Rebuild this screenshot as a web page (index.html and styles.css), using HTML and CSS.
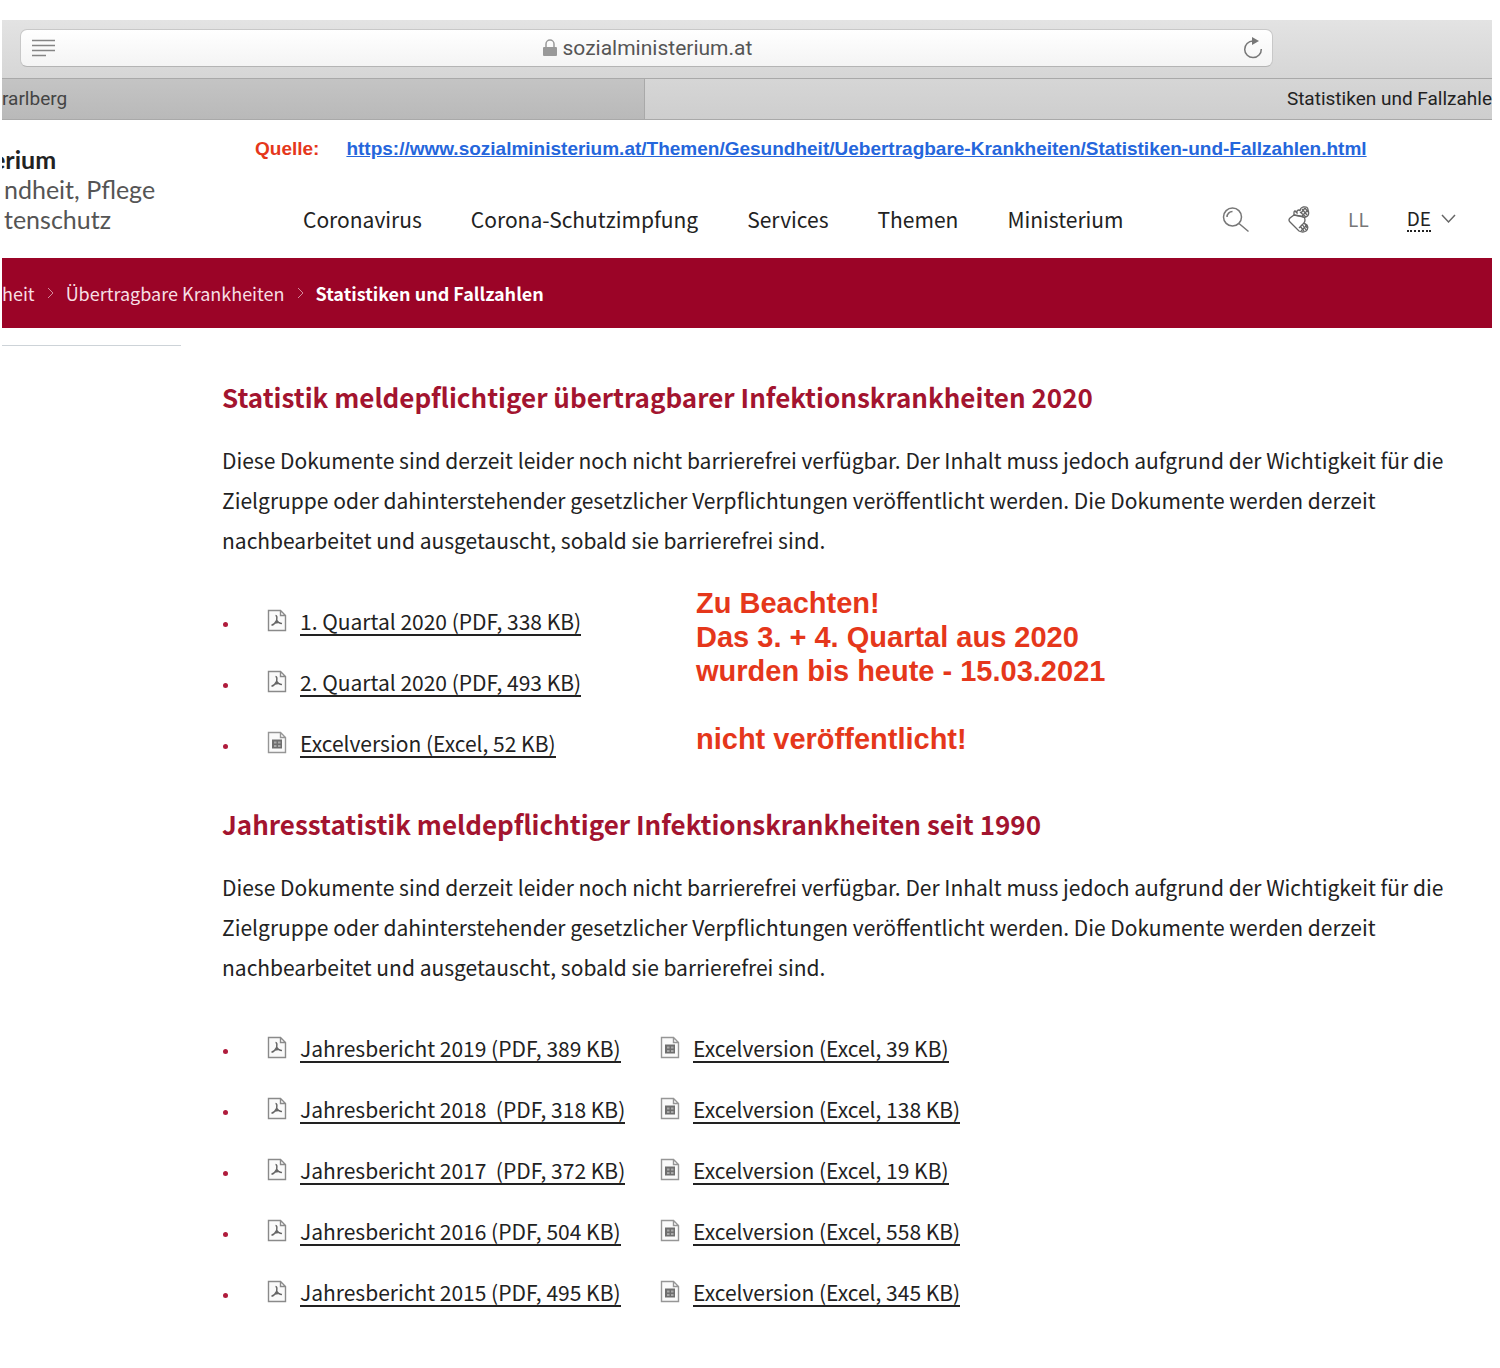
FILE: index.html
```html
<!DOCTYPE html>
<html lang="de">
<head>
<meta charset="utf-8">
<title>Statistiken und Fallzahlen</title>
<link rel="stylesheet" href="styles.css">
</head>
<body>
<svg class="sprite" aria-hidden="true">
  <symbol id="pdf" viewBox="0 0 20 24">
    <path d="M1.500 1.500h12l5 5v15h-17zM13.500 1.500v5h5" fill="#fafafa" stroke="#8a8a8a" stroke-width="1.400"/>
    <path d="M8.500 6.500c2 0 1.200 3 1.200 4.800M9.700 11.300c-1 2-2.500 4.300-5.200 5M9.700 11.300c1 1.900 2.500 2.900 5.300 3.200M7.300 14.400c2-.9 4-1.100 6-.6" fill="none" stroke="#666" stroke-width="1.500"/>
  </symbol>
  <symbol id="xls" viewBox="0 0 20 24">
    <path d="M1.500 1.500h12l5 5v15h-17zM13.500 1.500v5h5" fill="#fafafa" stroke="#969696" stroke-width="1.400"/>
    <path d="M5 8.500h10v9H5z" fill="#6e6e6e"/>
    <path d="M7 10.500h2.500v2H7zM11 10.500h2.500v2H11zM7 14h2.500v2H7zM11 14h2.500v2H11z" fill="#a8a8a8"/>
  </symbol>
</svg>

<header class="browser">
  <div class="toolbar">
    <form class="address">
      <button class="plain" type="button" aria-label="Reader">
        <svg width="24" height="18" viewBox="0 0 24 18" fill="none" stroke="#858585" stroke-width="1.500"><path d="M0 1.500h23M0 6.500h23M0 11.500h23M0 16.500h14"/></svg>
      </button>
      <div class="location">
        <svg width="14" height="18" viewBox="0 0 14 18"><path d="M3 8V5a4 4 0 0 1 8 0v3" fill="none" stroke="#999" stroke-width="1.500"/><rect x="0" y="8" width="14" height="9" rx="1" fill="#999"/></svg>
        <input class="url" type="text" value="sozialministerium.at" aria-label="Adresse">
      </div>
      <button class="plain" type="button" aria-label="Neu laden">
        <svg width="20" height="22" viewBox="0 0 20 22"><path d="M10 4a8.300 8.300 0 1 0 8.300 8" fill="none" stroke="#777" stroke-width="1.500"/><path d="M9 0v8l7-4z" fill="#777"/></svg>
      </button>
    </form>
  </div>
  <nav class="tabs" aria-label="Tabs">
    <a class="tab" href="#">rarlberg</a>
    <a class="tab tab-active" href="#">Statistiken und Fallzahle</a>
  </nav>
</header>

<div class="masthead">
  <div class="logo"><strong>erium</strong><span>ndheit, Pflege</span><span>tenschutz</span></div>
  <div class="masthead-main">
    <p class="source"><span>Quelle:</span><a href="#">https://www.sozialministerium.at/Themen/Gesundheit/Uebertragbare-Krankheiten/Statistiken-und-Fallzahlen.html</a></p>
    <div class="navrow">
      <nav class="menu" aria-label="Hauptmenü">
        <a href="#">Coronavirus</a><a href="#">Corona-Schutzimpfung</a><a href="#">Services</a><a href="#">Themen</a><a href="#">Ministerium</a>
      </nav>
      <div class="tools">
        <button class="plain" type="button" aria-label="Suche">
          <svg width="28" height="28" viewBox="0 0 28 28" fill="none" stroke="#777" stroke-width="1.500"><circle cx="10.500" cy="12" r="9"/><path d="M5 12A5.500 5.500 0 0 1 10.500 6.500M17 18.500l9.500 8"/></svg>
        </button>
        <a class="sign" href="#" aria-label="Gebärdensprache">
          <svg width="22" height="27" viewBox="0 0 22 27" fill="none" stroke="#666" stroke-width="1.300"><path d="M6 9V6q1-2 2 0l1 1V5q2-2 3 0 0-3 3-4 5-1 5 3 2 5-2 7-2 1-5-1z"/><path d="M6 9l-4 3q-2 2 0 4l9 9q4 2 7 0 3-3 1-6l-3-2q2-3 0-6z"/><path d="M12 6l6 5M14 3l5 6M17 2l3 4M20 4l-6 6M17 2l-4 5M12 20l4 5M14 18l4 6M17 18l2 4M19 19l-6 6M16 17l-5 5"/></svg>
        </a>
        <a class="easy" href="#">LL</a>
        <button class="plain lang" type="button"><span>DE</span>
          <svg width="15" height="10" viewBox="0 0 15 10" fill="none" stroke="#666" stroke-width="1.500"><path d="M1 1l6.500 7L14 1"/></svg>
        </button>
      </div>
    </div>
  </div>
</div>

<nav class="crumbs" aria-label="Brotkrumen">
  <a href="#">heit</a>
  <svg width="7" height="12" viewBox="0 0 7 12"><path d="M1 1l5 5-5 5"/></svg>
  <a href="#">Übertragbare Krankheiten</a>
  <svg width="7" height="12" viewBox="0 0 7 12"><path d="M1 1l5 5-5 5"/></svg>
  <strong>Statistiken und Fallzahlen</strong>
</nav>

<div class="page">
  <aside class="side"></aside>
  <main class="content">
    <section>
      <h2>Statistik meldepflichtiger übertragbarer Infektionskrankheiten 2020</h2>
      <p>Diese Dokumente sind derzeit leider noch nicht barrierefrei verfügbar. Der Inhalt muss jedoch aufgrund der Wichtigkeit für die Zielgruppe oder dahinterstehender gesetzlicher Verpflichtungen veröffentlicht werden. Die Dokumente werden derzeit nachbearbeitet und ausgetauscht, sobald sie barrierefrei sind.</p>
      <div class="with-note">
        <ul class="docs">
          <li><span class="doc"><svg><use href="#pdf"/></svg><a href="#">1. Quartal 2020 (PDF, 338 KB)</a></span></li>
          <li><span class="doc"><svg><use href="#pdf"/></svg><a href="#">2. Quartal 2020 (PDF, 493 KB)</a></span></li>
          <li><span class="doc"><svg><use href="#xls"/></svg><a href="#">Excelversion (Excel, 52 KB)</a></span></li>
        </ul>
        <div class="note">Zu Beachten!<br>Das 3. + 4. Quartal aus 2020<br>wurden bis heute - 15.03.2021<br><br>nicht veröffentlicht!</div>
      </div>
    </section>
    <section>
      <h2>Jahresstatistik meldepflichtiger Infektionskrankheiten seit 1990</h2>
      <p>Diese Dokumente sind derzeit leider noch nicht barrierefrei verfügbar. Der Inhalt muss jedoch aufgrund der Wichtigkeit für die Zielgruppe oder dahinterstehender gesetzlicher Verpflichtungen veröffentlicht werden. Die Dokumente werden derzeit nachbearbeitet und ausgetauscht, sobald sie barrierefrei sind.</p>
      <ul class="docs">
        <li><span class="doc"><svg><use href="#pdf"/></svg><a href="#">Jahresbericht 2019 (PDF, 389 KB)</a></span><span class="doc"><svg><use href="#xls"/></svg><a href="#">Excelversion (Excel, 39 KB)</a></span></li>
        <li><span class="doc"><svg><use href="#pdf"/></svg><a href="#">Jahresbericht 2018&nbsp; (PDF, 318 KB)</a></span><span class="doc"><svg><use href="#xls"/></svg><a href="#">Excelversion (Excel, 138 KB)</a></span></li>
        <li><span class="doc"><svg><use href="#pdf"/></svg><a href="#">Jahresbericht 2017&nbsp; (PDF, 372 KB)</a></span><span class="doc"><svg><use href="#xls"/></svg><a href="#">Excelversion (Excel, 19 KB)</a></span></li>
        <li><span class="doc"><svg><use href="#pdf"/></svg><a href="#">Jahresbericht 2016 (PDF, 504 KB)</a></span><span class="doc"><svg><use href="#xls"/></svg><a href="#">Excelversion (Excel, 558 KB)</a></span></li>
        <li><span class="doc"><svg><use href="#pdf"/></svg><a href="#">Jahresbericht 2015 (PDF, 495 KB)</a></span><span class="doc"><svg><use href="#xls"/></svg><a href="#">Excelversion (Excel, 345 KB)</a></span></li>
      </ul>
    </section>
  </main>
</div>
</body>
</html>
```
FILE: styles.css
```css
* { box-sizing: border-box; }

body {
  margin: 0;
  padding: 20px 8px 0 2px;
  background: #fff;
  color: #222;
  font-family: "Noto Sans CJK SC", "Noto Sans", sans-serif;
  font-size: 21px;
}

a { color: inherit; text-decoration: none; }
.sprite { display: none; }

.plain {
  display: flex;
  align-items: center;
  padding: 0;
  border: 0;
  background: none;
  color: inherit;
  font: inherit;
}

/* Browser frame */
.browser { font-family: Roboto, "Liberation Sans", sans-serif; }

.toolbar {
  height: 58px;
  padding: 9px 219px 11px 18px;
  background: linear-gradient(#e3e3e3, #d6d6d6);
}

.address {
  display: flex;
  align-items: center;
  justify-content: space-between;
  height: 38px;
  padding: 0 9px 0 11px;
  border: 1px solid #c8c8c8;
  border-bottom-color: #b4b4b4;
  border-radius: 7px;
  background: linear-gradient(#fff, #f4f4f4);
}

.location { display: flex; align-items: center; gap: 6px; }

.url {
  width: 194px;
  padding: 0;
  border: 0;
  background: none;
  color: #555;
  font: 21px/24px Roboto, "Liberation Sans", sans-serif;
}

.tabs {
  display: flex;
  height: 42px;
  border: solid #a9a9a9;
  border-width: 1px 0;
  font-size: 19px;
  line-height: 40px;
}

.tab {
  flex: 0 0 642px;
  background: linear-gradient(#c4c4c4, #b9b9b9);
  color: #444;
  white-space: nowrap;
}

.tab-active {
  flex: 1;
  border-left: 1px solid #a9a9a9;
  background: linear-gradient(#d6d6d6, #cecece);
  color: #222;
  text-align: right;
}

/* Site header */
.masthead { display: flex; height: 138px; overflow: hidden; }

.logo {
  display: flex;
  flex: 0 0 253px;
  flex-direction: column;
  padding: 24px 0 0 2px;
  color: #555;
  font-family: Lato, sans-serif;
  font-size: 25px;
  line-height: 30px;
}

.logo strong { margin-left: -12px; color: #222; }
.masthead-main { flex: 1; min-width: 0; }

.source {
  display: flex;
  gap: 27px;
  margin: 0;
  padding-top: 17px;
  color: #e5371b;
  font: bold 19px/24px "Liberation Sans", Arial, sans-serif;
  white-space: nowrap;
}

.source a { color: #2566dc; text-decoration: underline; }

.navrow {
  display: flex;
  justify-content: space-between;
  margin-top: 42px;
  padding: 0 36px 0 48px;
  line-height: 32px;
}

.menu { display: flex; gap: 49px; }
.tools { display: flex; align-items: center; gap: 38px; font-size: 19px; }
.sign { display: flex; }
.easy { color: #777; }
.lang { gap: 10px; }
.lang span { border-bottom: 2px dotted #222; line-height: 24px; }

.crumbs {
  display: flex;
  align-items: center;
  gap: 12px;
  height: 70px;
  background: #9b0427;
  color: #f7dfe4;
  font-size: 18px;
}

.crumbs strong { color: #fff; }
.crumbs path { fill: none; stroke: #d58a9b; stroke-width: 1; }

/* Content */
.page { display: flex; gap: 41px; padding-top: 17px; }
.side { flex: 0 0 179px; height: 1px; background: #cdd3d8; }
.content { flex: 1; padding: 34px 20px 0 0; }

h2 {
  margin: 0;
  color: #a3142f;
  font-size: 26px;
  line-height: 36px;
}

.content p { margin: 25px 0 32px; line-height: 40px; }

.docs { margin: 0; padding: 0; list-style: none; }

.docs li {
  display: grid;
  grid-template-columns: 45px 393px auto;
  align-items: center;
  height: 61px;
}

.docs li::before {
  width: 5px;
  height: 5px;
  margin: 4px 0 0 1px;
  border-radius: 50%;
  background: #b01c3d;
  content: "";
}

.doc { display: flex; align-items: flex-start; gap: 13px; white-space: nowrap; }
.doc svg { width: 20px; height: 24px; }
.doc a { border-bottom: 2px solid #222; line-height: 25px; }

.with-note { display: flex; margin-bottom: 31px; }
.with-note .docs { flex: 0 0 474px; }

.note {
  margin-top: -6px;
  color: #e5371b;
  font: bold 29px/34px "Liberation Sans", Arial, sans-serif;
}
```
